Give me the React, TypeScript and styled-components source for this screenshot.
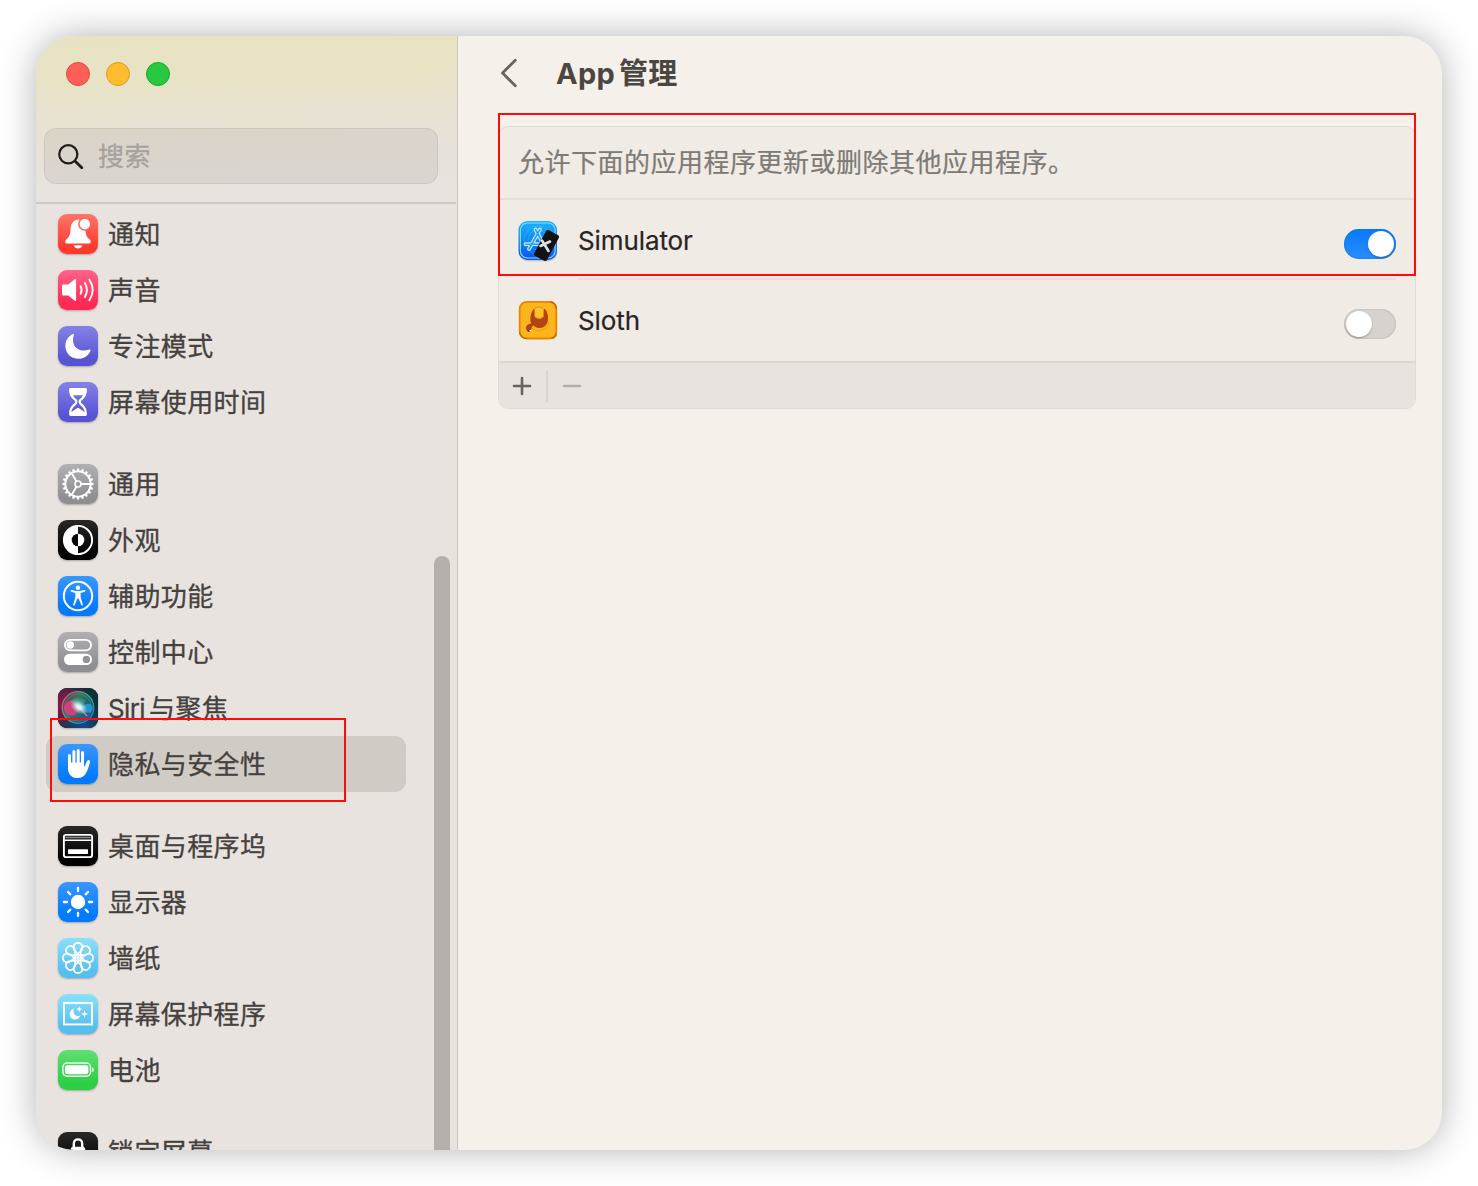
import React, { useState } from "react";
import styled, { createGlobalStyle } from "styled-components";

const GlobalStyle = createGlobalStyle`
  * { box-sizing: border-box; }
  body {
    margin: 0;
    background: #fff;
    overflow: hidden;
    font-family: Inter, "Noto Sans CJK SC", sans-serif;
    color: #45413e;
  }
`;

const Desktop = styled.div`
  height: 1186px;
  padding: 36px;
  position: relative;
`;

const Window = styled.div`
  display: flex;
  width: 1406px;
  height: 1114px;
  border-radius: 38px;
  overflow: hidden;
  background: #f5f0ea;
  box-shadow: 0 0 36px rgba(0, 0, 0, 0.3);
`;

const Sidebar = styled.aside`
  display: flex;
  flex-direction: column;
  width: 422px;
  flex: none;
  position: relative;
  border-right: 1px solid #cbc6c0;
  background: linear-gradient(178deg, #e7e3c2 0, #e7e3c4 48px, #e8e2d0 78px, #e7e1db 128px, #e8e3df 160px);
`;

const SidebarHeader = styled.div`
  display: flex;
  flex-direction: column;
  height: 168px;
  flex: none;
  margin-right: 1px;
  border-bottom: 2px solid #cec9c5;
`;

const TrafficLights = styled.div`
  display: flex;
  gap: 16px;
  padding: 26px 30px 42px;
`;

const Light = styled.span<{ $fill: string; $edge: string }>`
  width: 24px;
  height: 24px;
  border-radius: 50%;
  background: ${(p) => p.$fill};
  border: 1px solid ${(p) => p.$edge};
`;

const SearchField = styled.label`
  display: flex;
  align-items: center;
  gap: 14px;
  width: 394px;
  height: 56px;
  margin-left: 8px;
  padding: 2px 0 0 13px;
  border: 1px solid rgba(100, 90, 70, 0.1);
  border-radius: 12px;
  background: rgba(105, 98, 90, 0.1);
`;

const SearchText = styled.span`
  font-size: 26px;
  letter-spacing: 0.4px;
  line-height: 36px;
  color: #a7a29e;
  -webkit-text-stroke: 0.3px currentColor;
`;

const SettingsList = styled.nav`
  display: flex;
  flex-direction: column;
  gap: 26px;
  padding: 2px 0 0 10px;
  min-height: 0;
  flex: 1;
  overflow: hidden;
`;

const Group = styled.div`
  display: flex;
  flex-direction: column;
  flex: none;
`;

const SettingRow = styled.div<{ $selected?: boolean }>`
  display: flex;
  align-items: center;
  gap: 10px;
  width: 360px;
  height: 56px;
  padding-left: 12px;
  border-radius: 11px;
  background: ${(p) => (p.$selected ? "#d0cbc5" : "transparent")};
`;

const SettingLabel = styled.span`
  display: flex;
  gap: 4px;
  font-size: 26px;
  letter-spacing: 0.4px;
  line-height: 36px;
  padding-top: 2px;
  white-space: nowrap;
  -webkit-text-stroke: 0.3px currentColor;
`;

const LatinRun = styled.span`
  letter-spacing: -0.6px;
`;

const IconTile = styled.span<{ $from: string; $to: string }>`
  display: flex;
  width: 40px;
  height: 40px;
  flex: none;
  border-radius: 9px;
  overflow: hidden;
  background: linear-gradient(${(p) => p.$from}, ${(p) => p.$to} 85%);
  box-shadow: 0 1px 2px rgba(0, 0, 0, 0.28);
`;

const Scrollbar = styled.div`
  position: absolute;
  right: 7px;
  top: 520px;
  bottom: -10px;
  width: 16px;
  border-radius: 8px;
  background: #b5b0ac;
`;

const Content = styled.main`
  display: flex;
  flex-direction: column;
  flex: 1;
  padding: 0 26px 0 40px;
`;

const Toolbar = styled.header`
  display: flex;
  align-items: center;
  height: 90px;
  padding: 0 0 16px 2px;
  gap: 36px;
`;

const Title = styled.h1`
  display: flex;
  gap: 4px;
  margin: 0;
  font-size: 29px;
  font-weight: 700;
  line-height: 40px;
  letter-spacing: 0.25px;
  color: #4a4642;
  padding-top: 2px;
`;

const Panel = styled.section`
  display: flex;
  flex-direction: column;
  width: 918px;
  height: 283px;
  border: 1px solid #e0dbd6;
  border-radius: 10px;
  overflow: hidden;
  background: #f0ebe5;
`;

const Notice = styled.p`
  margin: 0;
  height: 73px;
  padding: 18px 19px 0;
  border-bottom: 2px solid #e4dfda;
  font-size: 26px;
  letter-spacing: 0.5px;
  line-height: 36px;
  color: #7e7a76;
  -webkit-text-stroke: 0.2px currentColor;
`;

const AppRow = styled.div`
  display: flex;
  align-items: center;
  height: 80px;
  padding: 0 19px 0 18px;
`;

const AppIcon = styled.svg`
  width: 44px;
  height: 48px;
  flex: none;
`;

const AppBody = styled.div<{ $divided?: boolean }>`
  display: flex;
  align-items: center;
  justify-content: space-between;
  flex: 1;
  height: 80px;
  margin-left: 17px;
  border-bottom: 2px solid ${(p) => (p.$divided ? "#e5e0dc" : "transparent")};
`;

const AppName = styled.span`
  font-size: 26px;
  line-height: 36px;
  letter-spacing: -0.1px;
  color: #282523;
  padding-top: 4px;
  -webkit-text-stroke: 0.2px currentColor;
`;

const Toggle = styled.button<{ $on: boolean }>`
  display: flex;
  align-items: center;
  justify-content: ${(p) => (p.$on ? "flex-end" : "flex-start")};
  width: 52px;
  height: 30px;
  margin-top: 10px;
  padding: 2px;
  border: 0;
  border-radius: 15px;
  background: ${(p) => (p.$on ? "linear-gradient(#087aff, #2a8dff)" : "#d7d2ce")};
  box-shadow: inset 0 0 2px ${(p) => (p.$on ? "#0068df" : "#a8a39e")};
`;

const Knob = styled.span`
  width: 26px;
  height: 26px;
  border-radius: 50%;
  background: #fff;
  box-shadow: 0 1px 2px rgba(0, 0, 0, 0.3);
`;

const PanelFooter = styled.footer`
  display: flex;
  align-items: center;
  flex: 1;
  margin-top: 1px;
  border-top: 2px solid #dcd7d2;
  background: #e8e3de;
`;

const FooterButton = styled.button<{ $dim?: boolean }>`
  display: flex;
  align-items: center;
  justify-content: center;
  width: ${(p) => (p.$dim ? 48 : 47)}px;
  height: 44px;
  padding: 0 ${(p) => (p.$dim ? 0 : 1)}px 0 0;
  border: 0;
  background: none;
  color: ${(p) => (p.$dim ? "#b4afaa" : "#68635f")};
`;

const FooterDivider = styled.span`
  width: 2px;
  height: 32px;
  background: #d9d4cf;
`;

const Highlight = styled.div<{ $x: number; $y: number; $w: number; $h: number }>`
  position: absolute;
  left: ${(p) => p.$x}px;
  top: ${(p) => p.$y}px;
  width: ${(p) => p.$w}px;
  height: ${(p) => p.$h}px;
  border: 2px solid #fc0d0b;
`;

const W = "#fff";
const range = (n: number) => Array.from({ length: n }, (_, i) => i);

const glyphs: Record<string, React.ReactNode> = {
  bell: (
    <>
      <path fill={W} d="M20 5.600c-5 .8-7.200 4.400-7.400 9.400-.2 6.500-2 8.400-4.400 10.500-1.300 1.100-1.400 3.900.5 3.900h22.600c1.900 0 1.900-2.800.5-3.900-3-2.500-4.300-4.500-4.400-10.500C27.200 9.500 25 5.800 20 5.600Z" />
      <path fill={W} d="M15.700 31.200h8.600c-.6 2.300-2.200 3.300-4.300 3.300s-3.700-1-4.300-3.300Z" />
      <circle cx="26.800" cy="10" r="6.700" fill="#ff6258" />
      <circle cx="26.800" cy="10" r="5.200" fill={W} />
    </>
  ),
  sound: (
    <>
      <path fill={W} d="M5.700 14.400h4.500l6.300-5c.8-.6 1.600-.3 1.600.7v19.800c0 1-.8 1.400-1.600.7l-6.300-5H5.700c-1.100 0-1.700-.6-1.700-1.700v-7.800c0-1.100.6-1.700 1.700-1.700Z" />
      <g fill="none" stroke={W} strokeWidth="1.900" strokeLinecap="round">
        <path d="M22.600 16.200q2 3.800 0 7.600M26.900 13q4 7 0 14M31.400 9.800q6.600 10.200 0 20.400" />
      </g>
    </>
  ),
  moon: <path fill={W} d="M14.500 8.200c1-.5 1.700 0 1.300 1-1.800 5.400-.5 10 2.800 12.800 3.500 3 8 3.200 12.800 1.500 1-.3 1.500.3 1.100 1.200-2 5-6.600 8.100-12 8.100C13 32.800 7.400 27.300 7.400 20c0-5.300 2.700-9.700 7.100-11.800Z" />,
  hourglass: (
    <path fill={W} fillRule="evenodd" d="M12.600 6h14.800c1 0 1.500.7 1.500 1.700 0 5.900-2.600 8.600-5.600 11-.7.6-.7 1.700 0 2.300 3.300 2.600 5.600 5.500 5.600 11.300 0 1.100-.5 1.700-1.500 1.700H12.600c-1 0-1.500-.6-1.500-1.700 0-5.800 2.300-8.700 5.600-11.300.7-.6.7-1.700 0-2.300-3-2.400-5.600-5.100-5.600-11C11.100 6.700 11.600 6 12.600 6Zm2.400 7.300c.9 1.900 2.300 3.100 3.400 4 1.400 1.300 1.300 3.300.3 4.700-1.500 1.900-4.700 3.700-5.400 8l5.700-3.800c.7-.4 1.300-.4 2 0l5.700 3.800c-.7-4.300-3.900-6.100-5.400-8-1-1.400-1.100-3.400.3-4.700 1.100-.9 2.500-2.100 3.400-4Z" />
  ),
  gear: (
    <g stroke={W} fill="none">
      <circle cx="20" cy="20" r="12.600" strokeWidth="1.900" />
      <circle cx="20" cy="20" r="3" strokeWidth="1.500" />
      {range(20).map((i) => (
        <path key={i} d="M32.800 18.700l2.600.6v1.400l-2.600.6z" fill={W} strokeWidth=".4" transform={`rotate(${i * 18} 20 20)`} />
      ))}
      {[0, 120, 240].map((a) => (
        <path key={a} d="M23.200 20H32" strokeWidth="1.900" transform={`rotate(${a} 20 20)`} />
      ))}
    </g>
  ),
  appearance: (
    <>
      <circle cx="20" cy="20" r="14.100" fill="none" stroke={W} strokeWidth="1.900" />
      <path d="M20 5.500a14.500 14.500 0 0 0 0 29Z" fill={W} />
      <path d="M20 13.700a6.300 6.300 0 0 0 0 12.600Z" fill="#080808" />
      <path d="M20 13.700a6.300 6.300 0 0 1 0 12.600Z" fill={W} />
    </>
  ),
  access: (
    <>
      <circle cx="20" cy="20" r="14.200" fill="none" stroke={W} strokeWidth="2" />
      <circle cx="20" cy="11.800" r="2.200" fill={W} />
      <path fill={W} d="M13.600 14.100 18 15h4l4.400-.9c1-.2 1.300 1.300.3 1.600l-4.100 1.200v4l2.200 7.700c.3 1.200-1.100 1.600-1.500.5l-2.700-6.700h-1.200l-2.700 6.700c-.4 1.100-1.800.7-1.500-.5l2.200-7.700v-4l-4.100-1.200c-1-.3-.7-1.800.3-1.600Z" />
    </>
  ),
  control: (
    <>
      <rect x="6.900" y="7.800" width="26.200" height="10.500" rx="5.250" fill="none" stroke={W} strokeWidth="1.800" />
      <circle cx="12.300" cy="13" r="3.700" fill={W} />
      <rect x="6" y="21.800" width="28" height="11.300" rx="5.650" fill={W} />
      <circle cx="28.400" cy="27.400" r="3.700" fill="#939297" />
    </>
  ),
  siri: (
    <>
      <defs>
        <radialGradient id="sa" cx=".1" cy=".4" r=".75">
          <stop offset="0" stopColor="#97134b" />
          <stop offset="1" stopColor="#97134b" stopOpacity="0" />
        </radialGradient>
        <radialGradient id="sb" cx=".65" cy=".95" r=".6">
          <stop offset="0" stopColor="#124a91" />
          <stop offset="1" stopColor="#124a91" stopOpacity="0" />
        </radialGradient>
        <linearGradient id="sc" x2="1" y2="1">
          <stop stopColor="#f4608d" />
          <stop offset=".5" stopColor="#4dcfa3" />
          <stop offset="1" stopColor="#278fdd" />
        </linearGradient>
        <radialGradient id="sd">
          <stop stopColor="#fff" />
          <stop offset=".3" stopColor="#dff8ff" stopOpacity=".9" />
          <stop offset="1" stopColor="#8de6e8" stopOpacity="0" />
        </radialGradient>
        <linearGradient id="se" x2="1" y2=".6">
          <stop stopColor="#8c2555" />
          <stop offset=".45" stopColor="#2b8c69" />
          <stop offset="1" stopColor="#17578c" />
        </linearGradient>
      </defs>
      <rect width="40" height="40" fill="#0b3238" />
      <rect width="40" height="40" fill="url(#sa)" />
      <rect width="40" height="40" fill="url(#sb)" />
      <circle cx="20" cy="19.500" r="15.800" fill="url(#se)" fillOpacity=".8" stroke="url(#sc)" strokeOpacity=".75" strokeWidth="1.200" />
      <circle cx="20" cy="19.500" r="13.500" fill="none" stroke="url(#sc)" strokeOpacity=".3" />
      <path fill="#e53c7c" fillOpacity=".85" d="M6 20c0-5 4-7.500 8-7 4 .5 5 4 9 8-4 4-6 7-10 6.500-4-.4-7-3.500-7-7.500Z" />
      <path fill="#2aa5e5" fillOpacity=".75" d="M20 20c5-2 8-5 12-4 3 1 3.500 6 1 8-4 2.500-8-1-13-4Z" />
      <path fill="#77e0c1" fillOpacity=".25" d="M12 13c5-4 12-4 16 0l-7 8Z" />
      <path stroke="#ef759a" strokeWidth="1.200" d="m22 20 7 8" />
      <ellipse cx="21" cy="19" rx="9.500" ry="6.500" fill="url(#sd)" transform="rotate(35 21 19)" />
    </>
  ),
  hand: (
    <g fill="none" stroke={W} strokeLinecap="round" strokeLinejoin="round">
      <path strokeWidth="3" d="M11.500 22V11.600M15.900 20V7.500M20.200 20V6.500M24.500 20V8.500" />
      <path fill={W} strokeWidth="0" d="M10 18.500h16v4.300c.8-.6 1.400-1.900 2-3.400.8-1.900 1.500-3.400 2.700-3.300 1.200 0 1.500 1.300 1.200 2.500-.8 3.600-2.300 8.200-4.400 11.400-1.800 2.800-4.200 4.100-7.800 4.100-5.700 0-9.700-3.600-9.700-9.600Z" />
    </g>
  ),
  dock: (
    <>
      <rect x="5.900" y="8.900" width="28.200" height="22.200" rx="2.200" fill="none" stroke={W} strokeWidth="1.900" />
      <path stroke="#888" strokeWidth="1.500" d="M7.500 11.500h25" />
      <path stroke={W} strokeWidth="1.400" d="M6.500 14.200h27" />
      <rect x="10" y="23.200" width="20" height="4.800" rx=".7" fill={W} />
    </>
  ),
  sun: (
    <>
      <circle cx="20" cy="20" r="7.200" fill={W} />
      {range(8).map((i) => (
        <path key={i} d="M31 20h3.100" stroke={W} strokeWidth="2.300" strokeLinecap="round" transform={`rotate(${i * 45} 20 20)`} />
      ))}
    </>
  ),
  flower: (
    <g fill="none" stroke={W} strokeWidth="1.600">
      {range(8).map((i) => (
        <path key={i} d="M21.700 17.800 17 12.900C14.400 10.200 15.300 4.900 20 4.900s5.600 5.300 3 8l-4.700 4.900" transform={`rotate(${i * 45} 20 20)`} />
      ))}
      <circle cx="20" cy="20" r="1.900" fill={W} stroke="none" />
    </g>
  ),
  saver: (
    <>
      <rect x="6" y="8.900" width="28" height="21.500" fill="none" stroke={W} strokeWidth="1.900" />
      <path fill={W} d="M15.700 14.400c-1.200 5.300 1.700 8.100 6.500 7.400-.9 2.500-2.800 3.700-5.100 3.700-3.200 0-5.400-2.200-5.400-5.200 0-2.700 1.600-5 4-5.900Z" />
      <path fill={W} d="m21.300 12.200.8 2.100 2.100.8-2.100.8-.8 2.100-.8-2.100-2.100-.8 2.100-.8ZM26.500 16.300l1 2.700 2.700 1-2.700 1-1 2.700-1-2.700-2.700-1 2.700-1Z" />
    </>
  ),
  battery: (
    <>
      <rect x="4.900" y="13.100" width="27.600" height="13.200" rx="4.200" fill="none" stroke={W} strokeOpacity=".9" strokeWidth="1.500" />
      <rect x="7" y="15.200" width="23.400" height="9" rx="2.300" fill={W} />
      <path fill={W} d="M34.200 17.200q1.700.8 1.700 2.500t-1.700 2.500Z" />
    </>
  ),
  lock: (
    <>
      <path d="M15.800 16v-4.200c0-5.900 8.400-5.900 8.400 0V16" fill="none" stroke={W} strokeWidth="2.400" />
      <rect x="12.800" y="14.700" width="14.400" height="15" rx="2.500" fill={W} />
    </>
  ),
};

type Item = { icon: string; latin?: string; label: string; from: string; to: string };
const item = (icon: string, label: string, from: string, to: string, latin?: string): Item => ({ icon, label, from, to, latin });

const groups: Item[][] = [
  [
    item("bell", "通知", "#ff756b", "#ff382e"),
    item("sound", "声音", "#ff638a", "#ff2954"),
    item("moon", "专注模式", "#8582e6", "#5753d3"),
    item("hourglass", "屏幕使用时间", "#8582e6", "#5753d3"),
  ],
  [
    item("gear", "通用", "#b0afb4", "#8f8e93"),
    item("appearance", "外观", "#282828", "#000"),
    item("access", "辅助功能", "#3b97ff", "#007aff"),
    item("control", "控制中心", "#b0afb4", "#8f8e93"),
    item("siri", "与聚焦", "#222", "#111", "Siri"),
    item("hand", "隐私与安全性", "#3b97ff", "#007aff"),
  ],
  [
    item("dock", "桌面与程序坞", "#282828", "#000"),
    item("sun", "显示器", "#3b97ff", "#007aff"),
    item("flower", "墙纸", "#8ce0fa", "#55bef0"),
    item("saver", "屏幕保护程序", "#8ce0fa", "#55bef0"),
    item("battery", "电池", "#5fdf73", "#2bce45"),
  ],
  [item("lock", "锁定屏幕", "#282828", "#000")],
];

const SimulatorIcon = () => (
  <AppIcon viewBox="0 0 44 48">
    <defs>
      <linearGradient id="sim" x2="0" y2="1">
        <stop stopColor="#19b4fb" />
        <stop offset="1" stopColor="#0b55ed" />
      </linearGradient>
    </defs>
    <rect x="2" y="6" width="38" height="39.500" rx="9" fill="#777" opacity=".3" />
    <rect x="1.500" y="5" width="38.500" height="39" rx="9" fill="url(#sim)" />
    <rect x="3.400" y="7" width="34.700" height="35" rx="7" fill="none" stroke="#8adaff" strokeWidth="1.100" />
    <g fill="none" stroke="#69c8ff" strokeWidth=".5" opacity=".65">
      <circle cx="21" cy="24" r="14" />
      <circle cx="21" cy="24" r="10" />
    </g>
    <g fill="none" stroke="#c6edff" strokeLinecap="round" strokeWidth="3.800">
      <path d="M23 13.500 12 33M18.500 13.500l10 18.500M8.500 28.200h25" />
    </g>
    <g fill="none" stroke="#289dec" strokeLinecap="round" strokeWidth="1.600">
      <path d="M23 13.500 12 33M18.500 13.500l10 18.500M8.500 28.200h25" />
    </g>
    <rect x="22.300" y="15" width="14.500" height="29" rx="2.200" fill="#131313" transform="rotate(28 29.500 29.500)" />
    <path d="m23.500 30 9.500-4.500M25 24.500l6.500 10.500" stroke="#dfe3e7" strokeWidth="2.600" strokeLinecap="round" />
  </AppIcon>
);

const SlothIcon = () => (
  <AppIcon viewBox="0 0 44 48">
    <rect x="2.700" y="5.900" width="36.600" height="36.600" rx="7.200" fill="#fdb51b" stroke="#e98500" strokeWidth="1.800" />
    <path d="M33 5.900c4 0 6.300 3 6.300 7M2.700 36.200c0 4 3 6.300 7 6.300M34 42.500c3 0 5.300-2 5.300-5" fill="none" stroke="#a96505" strokeWidth="1.200" />
    <path fill="#b44312" d="M17 12.500c-3.600 4.500-4.600 10.500-2.800 15.200-3.100 0-5.700 2-5.200 5 .5 2.800 5 3 5.400.4.300-1.600 0-2.300 2-3.700 7.300 6.500 15.700.3 14.600-8.400-.3-4-1.500-6.500-3.700-8.500l-1.200 8.500c-1 2.500-6.600 2.500-7.800 0Z" />
    <path fill="#ffc02b" stroke="#a5711a" strokeWidth=".5" d="M17.500 20.500v-6.800c1-3.600 8.200-3.500 9.200 0v6.800c-1.600 2.300-7.600 2.300-9.200 0Z" />
    <path fill="none" stroke="#c66c16" strokeWidth=".7" strokeDasharray="1 1" d="M15 32c5.500 5 15 2.500 17-5.500" />
    <path d="m10.500 34.500 2 1" stroke="#271507" strokeWidth="1.200" />
    <circle cx="13.200" cy="34.500" r=".8" fill="#fff" />
  </AppIcon>
);

const apps = [
  { name: "Simulator", Icon: SimulatorIcon, on: true },
  { name: "Sloth", Icon: SlothIcon, on: false },
];

export default function App() {
  const [enabled, setEnabled] = useState(apps.map((a) => a.on));
  return (
    <Desktop>
      <GlobalStyle />
      <Window>
        <Sidebar>
          <SidebarHeader>
            <TrafficLights>
              <Light $fill="#ff5f57" $edge="#e2483f" />
              <Light $fill="#febc2e" $edge="#dd9d1c" />
              <Light $fill="#28c840" $edge="#17a92b" />
            </TrafficLights>
            <SearchField>
              <svg width="26" height="26" viewBox="0 0 26 26" fill="none" stroke="#1f1d1c" strokeLinecap="round">
                <circle cx="10.300" cy="10.300" r="9.100" strokeWidth="2.200" />
                <path d="m17.200 17.200 6.600 6.600" strokeWidth="2.800" />
              </svg>
              <SearchText>搜索</SearchText>
            </SearchField>
          </SidebarHeader>
          <SettingsList>
            {groups.map((group, i) => (
              <Group key={i}>
                {group.map((s) => (
                  <SettingRow key={s.label} $selected={s.icon === "hand"}>
                    <IconTile $from={s.from} $to={s.to}>
                      <svg width="40" height="40" viewBox="0 0 40 40">{glyphs[s.icon]}</svg>
                    </IconTile>
                    <SettingLabel>
                      {s.latin && <LatinRun>{s.latin}</LatinRun>}
                      <span>{s.label}</span>
                    </SettingLabel>
                  </SettingRow>
                ))}
              </Group>
            ))}
          </SettingsList>
          <Scrollbar />
        </Sidebar>
        <Content>
          <Toolbar>
            <svg width="20" height="30" viewBox="0 0 20 30" fill="none" stroke="#69645f" strokeWidth="2.800" strokeLinecap="round" strokeLinejoin="round">
              <path d="M15.300 2.200 2.500 15l12.800 12.800" />
            </svg>
            <Title>
              <span>App</span>
              <span>管理</span>
            </Title>
          </Toolbar>
          <Panel>
            <Notice>允许下面的应用程序更新或删除其他应用程序。</Notice>
            {apps.map(({ name, Icon }, i) => (
              <AppRow key={name}>
                <Icon />
                <AppBody $divided={i < apps.length - 1}>
                  <AppName>{name}</AppName>
                  <Toggle
                    $on={enabled[i]}
                    aria-label={name}
                    onClick={() => setEnabled(enabled.map((v, j) => (j === i ? !v : v)))}
                  >
                    <Knob />
                  </Toggle>
                </AppBody>
              </AppRow>
            ))}
            <PanelFooter>
              <FooterButton>
                <svg width="20" height="20" viewBox="0 0 20 20" stroke="currentColor" strokeWidth="2.600" strokeLinecap="round">
                  <path d="M10 2v16M2 10h16" />
                </svg>
              </FooterButton>
              <FooterDivider />
              <FooterButton $dim>
                <svg width="20" height="20" viewBox="0 0 20 20" stroke="currentColor" strokeWidth="2.600" strokeLinecap="round">
                  <path d="M2 10h16" />
                </svg>
              </FooterButton>
            </PanelFooter>
          </Panel>
        </Content>
      </Window>
      <Highlight $x={498} $y={113} $w={918} $h={163} />
      <Highlight $x={50} $y={718} $w={296} $h={84} />
    </Desktop>
  );
}
